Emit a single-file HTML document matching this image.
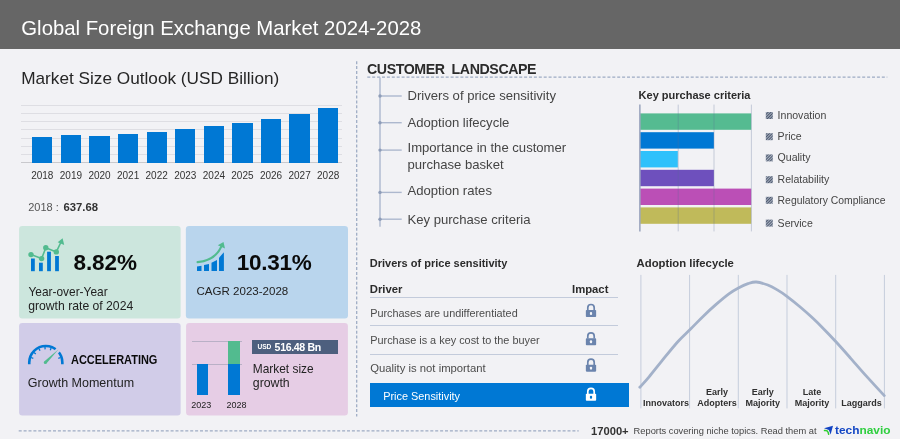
<!DOCTYPE html>
<html>
<head>
<meta charset="utf-8">
<title>Global Foreign Exchange Market 2024-2028</title>
<style>
html,body{margin:0;padding:0;}
body{width:900px;height:439px;position:relative;overflow:hidden;background:#f2f2f5;font-family:"Liberation Sans",sans-serif;color:#333;}
.t{position:absolute;white-space:nowrap;line-height:1;}
#root{position:absolute;left:0;top:0;width:900px;height:439px;will-change:transform;}
.b{font-weight:700;}
.abs{position:absolute;}
#hdr{position:absolute;left:0;top:0;width:900px;height:48.5px;background:#666666;}
.card{position:absolute;border-radius:4px;}
.bar{position:absolute;background:#0078d4;}
.gl{position:absolute;left:21.3px;width:321px;height:1px;background:#dedee3;}
.yl{position:absolute;width:30px;text-align:center;font-size:10px;line-height:1;top:170.6px;color:#333;}
.li{position:absolute;left:407.5px;font-size:13.1px;line-height:16px;color:#454545;white-space:nowrap;}
.lg{position:absolute;left:777.6px;font-size:10.55px;line-height:1;color:#444;white-space:nowrap;}
.row{position:absolute;left:370.2px;font-size:11px;line-height:1;color:#4c4c4c;white-space:nowrap;}
.al{position:absolute;width:60px;text-align:center;font-size:9px;font-weight:700;line-height:11.2px;color:#303030;}
</style>
</head>
<body>
<div id="root">
<div id="hdr"></div>
<div class="t" style="left:21.3px;top:18.3px;font-size:20.33px;color:#fff;">Global Foreign Exchange Market 2024-2028</div>

<!-- LEFT: market size outlook -->
<div class="t" style="left:21.2px;top:70px;font-size:17.22px;color:#262626;">Market Size Outlook (USD Billion)</div>

<div id="chart">
<div class="gl" style="top:104.8px"></div>
<div class="gl" style="top:113px"></div>
<div class="gl" style="top:121.2px"></div>
<div class="gl" style="top:129.4px"></div>
<div class="gl" style="top:137.6px"></div>
<div class="gl" style="top:145.8px"></div>
<div class="gl" style="top:154px"></div>
<div class="gl" style="top:162.2px;background:#c9c9cd;"></div>

<div class="bar" style="left:32.1px;width:20.4px;top:136.6px;height:26px"></div>
<div class="bar" style="left:60.7px;width:20.4px;top:135px;height:27.6px"></div>
<div class="bar" style="left:89.3px;width:20.4px;top:135.8px;height:26.8px"></div>
<div class="bar" style="left:117.9px;width:20.4px;top:134px;height:28.6px"></div>
<div class="bar" style="left:146.5px;width:20.4px;top:131.9px;height:30.7px"></div>
<div class="bar" style="left:175.1px;width:20.4px;top:129.4px;height:33.2px"></div>
<div class="bar" style="left:203.7px;width:20.4px;top:126.4px;height:36.2px"></div>
<div class="bar" style="left:232.2px;width:20.4px;top:122.9px;height:39.7px"></div>
<div class="bar" style="left:260.8px;width:20.4px;top:118.8px;height:43.8px"></div>
<div class="bar" style="left:289.4px;width:20.4px;top:113.9px;height:48.7px"></div>
<div class="bar" style="left:318px;width:20.4px;top:108.1px;height:54.5px"></div>

<div class="yl" style="left:27.3px">2018</div>
<div class="yl" style="left:55.9px">2019</div>
<div class="yl" style="left:84.5px">2020</div>
<div class="yl" style="left:113.1px">2021</div>
<div class="yl" style="left:141.7px">2022</div>
<div class="yl" style="left:170.3px">2023</div>
<div class="yl" style="left:198.9px">2024</div>
<div class="yl" style="left:227.4px">2025</div>
<div class="yl" style="left:256px">2026</div>
<div class="yl" style="left:284.6px">2027</div>
<div class="yl" style="left:313.2px">2028</div>
</div>

<div class="t" style="left:28.2px;top:202.2px;font-size:11px;color:#555;">2018 :</div>
<div class="t b" style="left:63.5px;top:202.1px;font-size:11.3px;color:#333;">637.68</div>

<!-- cards -->
<svg class="abs" style="left:0;top:220px" width="360" height="200" viewBox="0 220 360 200">
  <rect x="19.1" y="226" width="161.55" height="92.4" rx="3.2" fill="#cce6dd"/>
  <rect x="185.85" y="226" width="162.15" height="92.4" rx="3.2" fill="#b9d5ed"/>
  <rect x="19.1" y="323" width="161.55" height="92.5" rx="3.2" fill="#d1cce8"/>
  <rect x="186.1" y="323" width="161.8" height="92.5" rx="3.2" fill="#e6cde5"/>
</svg>

<!-- card 1: YoY -->
<svg class="abs" style="left:24px;top:234px" width="46" height="42" viewBox="24 234 46 42">
  <g fill="#0078d4">
    <rect x="31" y="258.5" width="3.8" height="12.7"/>
    <rect x="39" y="262.7" width="3.8" height="8.5"/>
    <rect x="47.1" y="251.7" width="3.8" height="19.5"/>
    <rect x="55.1" y="256" width="3.8" height="15.2"/>
  </g>
  <g stroke="#52bb8f" stroke-width="1.6" fill="none" stroke-linecap="round" stroke-linejoin="round">
    <polyline points="31,254.6 41.6,258.6 45.8,247.8 56.3,251.9 61.3,241.5"/>
  </g>
  <g fill="#52bb8f">
    <circle cx="31" cy="254.6" r="2.7"/>
    <circle cx="41.6" cy="258.6" r="2.7"/>
    <circle cx="45.8" cy="247.8" r="2.7"/>
    <circle cx="56.3" cy="251.9" r="2.7"/>
    <polygon points="62.6,238.3 64.2,245 57.7,242.2"/>
  </g>
</svg>
<div class="t b" style="left:73.6px;top:251.5px;font-size:22.5px;letter-spacing:-0.12px;color:#0a0a0a;">8.82%</div>
<div class="t" style="left:28.5px;top:286.8px;font-size:11.9px;color:#222;">Year-over-Year</div>
<div class="t" style="left:28.2px;top:300.3px;font-size:12.2px;color:#222;">growth rate of 2024</div>

<!-- card 2: CAGR -->
<svg class="abs" style="left:192px;top:238px" width="40" height="38" viewBox="192 238 40 38">
  <g fill="#0078d4">
    <polygon points="197,266.4 201.5,265.8 201.5,271.1 197,271.1"/>
    <polygon points="204,265.1 209,263.9 209,271.1 204,271.1"/>
    <polygon points="211.5,262.7 217,259.9 217,271.1 211.5,271.1"/>
    <polygon points="219,257.7 223.9,252.3 223.9,271.1 219,271.1"/>
  </g>
  <path d="M197.6,262.2 C207,261.2 217,256.5 221.4,246.4" stroke="#52bb8f" stroke-width="2.2" fill="none" stroke-linecap="round"/>
  <polygon points="223.5,242 225,248.4 217.8,245.2" fill="#52bb8f"/>
</svg>
<div class="t b" style="left:236.8px;top:251.5px;font-size:22.5px;letter-spacing:-0.25px;color:#0a0a0a;">10.31%</div>
<div class="t" style="left:196.5px;top:286.1px;font-size:11.55px;color:#222;">CAGR 2023-2028</div>

<!-- card 3: momentum -->
<svg class="abs" style="left:24px;top:340px" width="44" height="30" viewBox="24 340 44 30">
  <path d="M29.25,364.2 V362.6 A16.55,16.55 0 0 1 62.35,362.6 V364.2" stroke="#0078d4" stroke-width="2.6" fill="none"/>
  <g stroke="#0078d4" stroke-width="1.3">
    <line x1="31.0" y1="357.5" x2="33.3" y2="358.3"/>
    <line x1="34.0" y1="352.4" x2="35.8" y2="353.9"/>
    <line x1="39.0" y1="348.6" x2="40.0" y2="350.7"/>
    <line x1="45.0" y1="347.0" x2="45.1" y2="349.4"/>
    <line x1="51.1" y1="347.9" x2="50.3" y2="350.2"/>
    <line x1="60.6" y1="357.5" x2="58.3" y2="358.3"/>
  </g>
  <line x1="52.5" y1="355.8" x2="60" y2="347.9" stroke="#d1cce8" stroke-width="4.6"/>
  <polygon points="58.6,349.2 46.4,363.6 44.2,361.6" fill="#52bb8f"/>
  <circle cx="45.3" cy="362.6" r="1.5" fill="#52bb8f"/>
</svg>
<div class="t b" style="left:70.6px;top:354px;font-size:12.4px;transform:scaleX(0.886);transform-origin:0 0;color:#0a0a0a;">ACCELERATING</div>
<div class="t" style="left:27.8px;top:377px;font-size:12.5px;color:#222;">Growth Momentum</div>

<!-- card 4: market size growth -->
<div class="abs" style="left:192px;top:341px;width:50.2px;height:1px;background:#b9b0c6;"></div>
<div class="abs" style="left:192px;top:363.6px;width:50.2px;height:1px;background:#b9b0c6;"></div>
<div class="abs" style="left:196.6px;top:364.1px;width:11.8px;height:31px;background:#0078d4;"></div>
<div class="abs" style="left:227.8px;top:364.1px;width:12px;height:31px;background:#0078d4;"></div>
<div class="abs" style="left:227.8px;top:341.3px;width:12px;height:22.8px;background:#52bb8f;"></div>
<div class="t" style="left:191.2px;top:400.8px;font-size:9px;color:#222;">2023</div>
<div class="t" style="left:226.6px;top:400.8px;font-size:9px;color:#222;">2028</div>
<div class="abs" style="left:251.7px;top:339.6px;width:86.1px;height:14.8px;background:#4d5f7e;"></div>
<div class="t b" style="left:257.6px;top:344px;font-size:6.6px;letter-spacing:-0.15px;color:#fff;">USD</div>
<div class="t b" style="left:274.6px;top:341.8px;font-size:10.6px;letter-spacing:-0.35px;color:#fff;">516.48 Bn</div>
<div class="t" style="left:252.8px;top:363.8px;font-size:11.9px;color:#222;">Market size</div>
<div class="t" style="left:252.8px;top:376.7px;font-size:12.3px;color:#222;">growth</div>

<!-- dashed separators -->
<svg class="abs" style="left:0;top:0" width="900" height="439">
  <g stroke="#9dabc3" stroke-width="1.25" fill="none" stroke-dasharray="3 1.9">
    <line x1="356.7" y1="61.2" x2="356.7" y2="416.6"/>
    <line x1="367.3" y1="77" x2="887.3" y2="77"/>
    <line x1="18.7" y1="430.8" x2="578.7" y2="430.8"/>
  </g>
</svg>

<!-- CUSTOMER LANDSCAPE -->
<div class="t b" style="left:367px;top:61.6px;font-size:14.2px;letter-spacing:-0.42px;color:#2b2b2b;">CUSTOMER&nbsp; LANDSCAPE</div>
<svg class="abs" style="left:370px;top:77px" width="40" height="152" viewBox="370 77 40 152">
  <g stroke="#adb8ce" stroke-width="1.4" fill="none">
    <line x1="380" y1="77.6" x2="380" y2="226.7"/>
    <line x1="380" y1="96" x2="401.7" y2="96"/>
    <line x1="380" y1="122.7" x2="401.7" y2="122.7"/>
    <line x1="380" y1="150.1" x2="401.7" y2="150.1"/>
    <line x1="380" y1="192.4" x2="401.7" y2="192.4"/>
    <line x1="380" y1="219.2" x2="401.7" y2="219.2"/>
  </g>
  <g fill="#8f9db8">
    <circle cx="380" cy="96" r="1.7"/>
    <circle cx="380" cy="122.7" r="1.7"/>
    <circle cx="380" cy="150.1" r="1.7"/>
    <circle cx="380" cy="192.4" r="1.7"/>
    <circle cx="380" cy="219.2" r="1.7"/>
  </g>
</svg>
<div class="li" style="top:87.7px">Drivers of price sensitivity</div>
<div class="li" style="top:115.1px">Adoption lifecycle</div>
<div class="li" style="top:140.2px;line-height:16.6px">Importance in the customer<br>purchase basket</div>
<div class="li" style="top:183.1px">Adoption rates</div>
<div class="li" style="top:211.9px">Key purchase criteria</div>

<!-- Key purchase criteria -->
<div class="t b" style="left:638.6px;top:89.7px;font-size:11px;color:#2b2b2b;">Key purchase criteria</div>
<svg class="abs" style="left:636px;top:100px" width="120" height="136" viewBox="636 100 120 136">
  <rect x="640.3" y="113.4" width="110.9" height="16.4" fill="#55bb91"/>
  <rect x="640.3" y="132.2" width="73.6" height="16.4" fill="#0078d4"/>
  <rect x="640.3" y="151.0" width="37.5" height="16.4" fill="#2fc1fb"/>
  <rect x="640.3" y="169.8" width="73.6" height="16.4" fill="#6e50bd"/>
  <rect x="640.3" y="188.6" width="110.9" height="16.4" fill="#bb4fb6"/>
  <rect x="640.3" y="207.4" width="110.9" height="16.4" fill="#c0ba5a"/>
  <g stroke="rgba(90,110,150,0.3)" stroke-width="1">
    <line x1="678.2" y1="104.6" x2="678.2" y2="231.4"/>
    <line x1="714" y1="104.6" x2="714" y2="231.4"/>
    <line x1="751.4" y1="104.6" x2="751.4" y2="231.4"/>
  </g>
  <line x1="639.9" y1="104.6" x2="639.9" y2="231.4" stroke="#8391b0" stroke-width="1.2"/>
</svg>
<svg class="abs" style="left:765px;top:108px" width="10" height="122" viewBox="765 108 10 122">
  <defs>
    <pattern id="h" width="2" height="2" patternUnits="userSpaceOnUse" patternTransform="rotate(45)">
      <rect width="2" height="2" fill="#b2bac8"/>
      <rect width="1.1" height="2" fill="#4e5a70"/>
    </pattern>
  </defs>
  <g fill="url(#h)">
    <rect x="765.8" y="112" width="7" height="7"/>
    <rect x="765.8" y="133.2" width="7" height="7"/>
    <rect x="765.8" y="154.4" width="7" height="7"/>
    <rect x="765.8" y="176.2" width="7" height="7"/>
    <rect x="765.8" y="196.8" width="7" height="7"/>
    <rect x="765.8" y="219.6" width="7" height="7"/>
  </g>
</svg>
<div class="lg" style="top:110px">Innovation</div>
<div class="lg" style="top:131px">Price</div>
<div class="lg" style="top:152px">Quality</div>
<div class="lg" style="top:174px">Relatability</div>
<div class="lg" style="top:196px;font-size:10.4px">Regulatory Compliance</div>
<div class="lg" style="top:218px">Service</div>

<!-- Drivers of price sensitivity -->
<div class="t b" style="left:369.8px;top:258.4px;font-size:11px;color:#2b2b2b;">Drivers of price sensitivity</div>
<div class="t b" style="left:369.8px;top:283.5px;font-size:11.3px;color:#2b2b2b;">Driver</div>
<div class="t b" style="left:572px;top:283.5px;font-size:11.3px;color:#2b2b2b;">Impact</div>
<div class="abs" style="left:370px;top:296.8px;width:248.3px;height:1px;background:#c3cbdb;"></div>
<div class="abs" style="left:370px;top:324.8px;width:248.3px;height:1px;background:#c3cbdb;"></div>
<div class="abs" style="left:370px;top:354px;width:248.3px;height:1px;background:#c3cbdb;"></div>
<div class="row" style="top:308.4px;font-size:10.85px;">Purchases are undifferentiated</div>
<div class="row" style="top:334.8px;font-size:10.9px;">Purchase is a key cost to the buyer</div>
<div class="row" style="top:362.7px;font-size:11.3px;">Quality is not important</div>
<div class="abs" style="left:369.9px;top:383.4px;width:259.5px;height:23.6px;background:#0078d4;"></div>
<div class="t" style="left:383.2px;top:391.3px;font-size:10.9px;color:#fff;">Price Sensitivity</div>

<svg class="abs" style="left:584px;top:300px" width="14" height="106" viewBox="584 300 14 106">
  <defs>
    <g id="lock">
      <path d="M-3.2,0 V-2.6 A3.2,3.2 0 0 1 3.2,-2.6 V0" stroke-width="1.7" fill="none" stroke="currentColor"/>
      <rect x="-5.15" y="-0.3" width="10.3" height="7" rx="0.8" fill="currentColor"/>
      <rect x="-1.1" y="1.7" width="2.2" height="2.9" rx="0.9" style="fill:var(--k)"/>
    </g>
  </defs>
  <use href="#lock" x="591" y="310.3" color="#6b84ad" style="--k:#f4f5f8"/>
  <use href="#lock" x="591" y="338.6" color="#6b84ad" style="--k:#f4f5f8"/>
  <use href="#lock" x="591" y="364.95" color="#6b84ad" style="--k:#f4f5f8"/>
  <use href="#lock" x="591" y="394.1" color="#ffffff" style="--k:#0078d4"/>
</svg>

<!-- Adoption lifecycle -->
<div class="t b" style="left:636.6px;top:258.3px;font-size:11.3px;color:#2b2b2b;">Adoption lifecycle</div>
<svg class="abs" style="left:630px;top:270px" width="270" height="142" viewBox="630 270 270 142">
  <g stroke="#c5cddc" stroke-width="1" fill="none">
    <line x1="640.9" y1="274.9" x2="640.9" y2="408.4"/>
    <line x1="689.6" y1="274.9" x2="689.6" y2="408.4"/>
    <line x1="738.3" y1="274.9" x2="738.3" y2="408.4"/>
    <line x1="787" y1="274.9" x2="787" y2="408.4"/>
    <line x1="835.7" y1="274.9" x2="835.7" y2="408.4"/>
    <line x1="884.4" y1="274.9" x2="884.4" y2="408.4"/>
  </g>
  <path d="M639.8,387.3 C641.3,385.6 645.4,381.2 649.1,376.8 C652.8,372.4 657.1,366.8 661.9,360.9 C666.7,355.0 673.0,347.0 677.8,341.7 C682.6,336.4 686.4,333.2 690.6,329 C694.9,324.8 699.0,320.3 703.3,316.2 C707.5,312.1 711.8,308.1 716.1,304.4 C720.4,300.7 725.2,296.6 728.9,293.9 C732.6,291.2 735.2,289.7 738.4,288.0 C741.6,286.3 745.0,284.7 748,283.7 C751.0,282.7 753.0,281.8 756.3,282.0 C759.6,282.2 764.3,283.7 767.8,285.0 C771.3,286.3 774.1,288.0 777.3,289.9 C780.5,291.8 783.2,293.5 786.9,296.3 C790.6,299.1 795.4,302.9 799.6,306.5 C803.9,310.1 808.1,313.8 812.4,317.8 C816.7,321.8 821.3,326.4 825.2,330.4 C829.1,334.3 831.5,336.9 835.7,341.5 C840.0,346.1 845.6,352.5 850.7,358.3 C855.9,364.1 861.0,370.2 866.6,376.4 C872.2,382.6 881.3,392.4 884.3,395.6" stroke="#a3b1c9" stroke-width="2.8" fill="none" stroke-linecap="round" stroke-linejoin="round"/>
</svg>
<div class="al" style="left:636px;top:398.4px">Innovators</div>
<div class="al" style="left:687px;top:387.2px">Early<br>Adopters</div>
<div class="al" style="left:732.7px;top:387.2px">Early<br>Majority</div>
<div class="al" style="left:782px;top:387.2px">Late<br>Majority</div>
<div class="al" style="left:831.5px;top:398.4px">Laggards</div>

<!-- footer -->
<div class="t b" style="left:591px;top:426.4px;font-size:11.2px;color:#333;">17000+</div>
<div class="t" style="left:633.6px;top:427.4px;font-size:9.3px;color:#444;">Reports covering niche topics. Read them at</div>
<svg class="abs" style="left:822px;top:424px" width="14" height="12" viewBox="822 424 14 12">
  <polygon points="824,428.3 833,425.7 830.6,434.6 828.9,429.9" fill="#1243c2"/>
  <path d="M824.5,430.6 Q827.6,430.4 828,432 L828.7,434.2" stroke="#2fd02f" stroke-width="1.5" fill="none" stroke-linecap="round"/>
</svg>
<div class="t b" style="left:835.3px;top:424.9px;font-size:11.4px;transform:scaleX(1.045);transform-origin:0 0;color:#1447c4;">tech<span style="color:#2fcf3f">navio</span></div>

</div>
</body>
</html>
